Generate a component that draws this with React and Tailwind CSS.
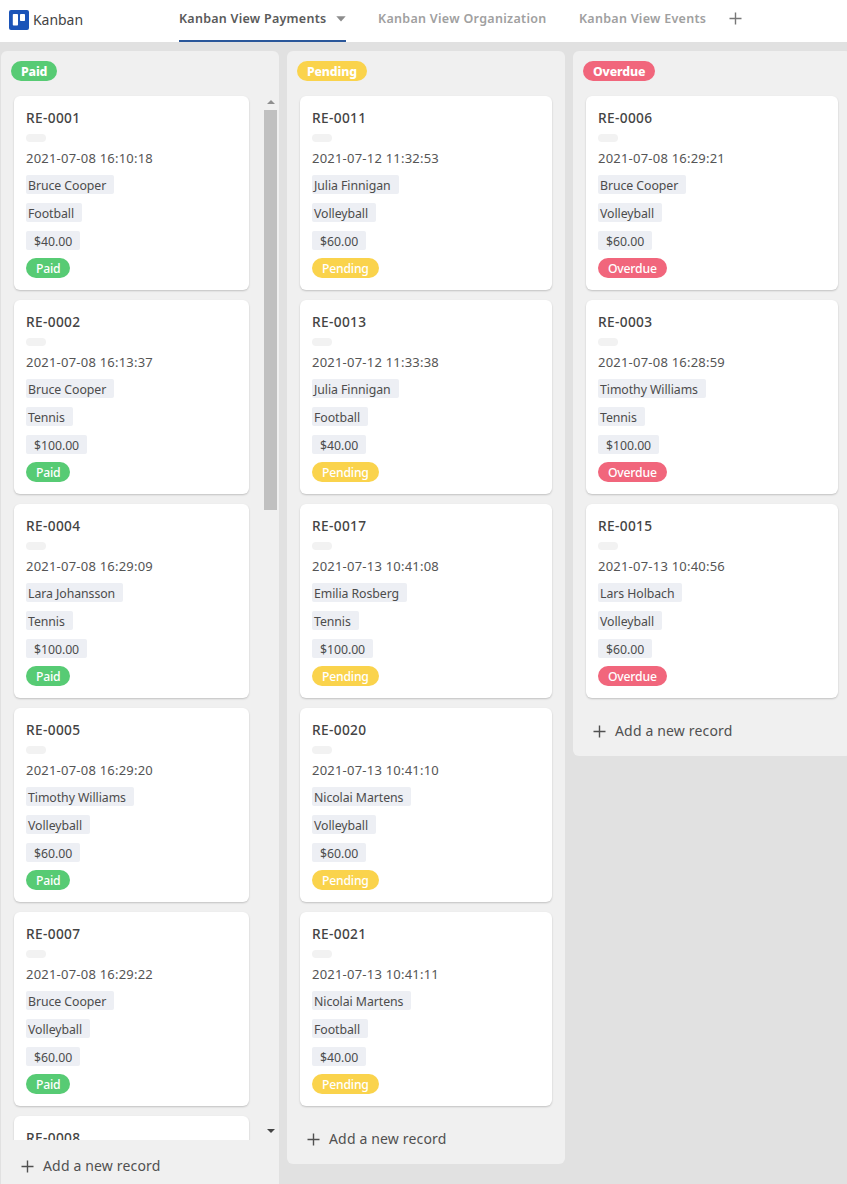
const STATUS = {
  Paid: "bg-[#57cb74]",
  Pending: "bg-[#fad34c]",
  Overdue: "bg-[#f1667c]",
};

const COLUMNS = [
  {
    status: "Paid",
    scroll: true,
    cards: [
      ["RE-0001", "2021-07-08 16:10:18", "Bruce Cooper", "Football", "$40.00"],
      ["RE-0002", "2021-07-08 16:13:37", "Bruce Cooper", "Tennis", "$100.00"],
      ["RE-0004", "2021-07-08 16:29:09", "Lara Johansson", "Tennis", "$100.00"],
      ["RE-0005", "2021-07-08 16:29:20", "Timothy Williams", "Volleyball", "$60.00"],
      ["RE-0007", "2021-07-08 16:29:22", "Bruce Cooper", "Volleyball", "$60.00"],
      ["RE-0008"],
    ],
  },
  {
    status: "Pending",
    cards: [
      ["RE-0011", "2021-07-12 11:32:53", "Julia Finnigan", "Volleyball", "$60.00"],
      ["RE-0013", "2021-07-12 11:33:38", "Julia Finnigan", "Football", "$40.00"],
      ["RE-0017", "2021-07-13 10:41:08", "Emilia Rosberg", "Tennis", "$100.00"],
      ["RE-0020", "2021-07-13 10:41:10", "Nicolai Martens", "Volleyball", "$60.00"],
      ["RE-0021", "2021-07-13 10:41:11", "Nicolai Martens", "Football", "$40.00"],
    ],
  },
  {
    status: "Overdue",
    cards: [
      ["RE-0006", "2021-07-08 16:29:21", "Bruce Cooper", "Volleyball", "$60.00"],
      ["RE-0003", "2021-07-08 16:28:59", "Timothy Williams", "Tennis", "$100.00"],
      ["RE-0015", "2021-07-13 10:40:56", "Lars Holbach", "Volleyball", "$60.00"],
    ],
  },
];

function Plus({ className }) {
  return (
    <svg viewBox="0 0 13 13" className={className} fill="none" stroke="currentColor" strokeWidth="1.4">
      <path d="M6.5 0.5V12.5M0.5 6.5H12.5" />
    </svg>
  );
}

function Header() {
  return (
    <header className="flex h-[42px] w-full shrink-0 bg-white">
      <div className="flex h-[39px] w-[179px] items-center gap-1 pl-[9px]">
        <svg viewBox="0 0 20 20" className="h-5 w-5">
          <rect width="20" height="20" rx="2" fill="#1b54b8" />
          <rect x="3.8" y="4" width="5.2" height="11.5" rx="0.8" fill="#fff" />
          <rect x="11" y="4" width="5" height="7" rx="0.8" fill="#fff" />
        </svg>
        <span className="text-[14px] leading-5 tracking-[-0.05px] text-[#444]">Kanban</span>
      </div>
      <nav className="flex text-[12.5px] font-semibold leading-5 whitespace-nowrap">
        <div className="flex h-[42px] w-[167px] justify-between border-b-2 border-[#2a579a] pt-[9px]">
          <span className="tracking-[0.26px] text-[#5a5a5a]">Kanban View Payments</span>
          <svg viewBox="0 0 10 6" className="mt-[7px] h-[6px] w-[10px]">
            <path d="M0.3 0.3H9.7L5 5.6Z" fill="#8c8c8c" />
          </svg>
        </div>
        <span className="ml-8 w-[169px] pt-[9px] tracking-[0.3px] text-[#a0a0a0]">Kanban View Organization</span>
        <span className="ml-8 w-[128px] pt-[9px] tracking-[0.28px] text-[#a0a0a0]">Kanban View Events</span>
        <Plus className="mt-[12px] ml-[22px] h-[13px] w-[13px] text-[#777]" />
      </nav>
    </header>
  );
}

function Tag({ children, money }) {
  return (
    <div
      className={
        "flex h-[19px] w-fit items-center rounded-[2px] bg-[#edeff4] pt-[2px] text-[12.3px] leading-[17px] text-[#4c4c4c] whitespace-nowrap tracking-[-0.06px] " +
        (money ? "px-2" : "pr-2 pl-[2px]")
      }
    >
      {children}
    </div>
  );
}

function Card({ data, status }) {
  const [id, date, person, sport, price] = data;
  return (
    <article className="h-[194px] shrink-0 rounded-md bg-white px-3 pt-3 shadow-[0_1px_2px_rgba(0,0,0,0.2)]">
      <div className="h-5 text-[13.7px] font-medium leading-5 tracking-[0.35px] text-[#444]">{id}</div>
      <div className="mt-[6px] h-2 w-5 rounded-full bg-[#f2f2f2]" />
      {date && (
        <>
          <div className="mt-[6px] h-5 text-[13px] leading-5 tracking-[0.22px] text-[#555]">{date}</div>
          <div className="mt-[7px] flex flex-col gap-[9px]">
            <Tag>{person}</Tag>
            <Tag>{sport}</Tag>
            <Tag money>{price}</Tag>
          </div>
          <div
            className={
              "mt-2 h-5 w-fit rounded-full px-[10px] text-[12.2px] font-medium leading-[21px] tracking-[-0.2px] text-white " +
              STATUS[status]
            }
          >
            {status}
          </div>
        </>
      )}
    </article>
  );
}

function AddRecord({ className }) {
  return (
    <div className={"flex h-5 shrink-0 items-center text-[#505050] " + className}>
      <Plus className="h-[13px] w-[13px]" />
      <span className="ml-[9px] text-[14px] leading-5 tracking-[0.16px]">Add a new record</span>
    </div>
  );
}

function Column({ status, cards, scroll }) {
  return (
    <section
      className={"flex w-[278px] shrink-0 flex-col rounded-md bg-[#f0f0f0] pt-[10px] " + (scroll ? "h-[1150px]" : "pb-[15px]")}
    >
      <div
        className={
          "ml-[10px] h-5 w-fit shrink-0 rounded-full px-[10px] text-[12.3px] font-extrabold leading-[21px] tracking-[-0.15px] text-white " +
          STATUS[status]
        }
      >
        {status}
      </div>
      <div className={"mt-[11px] flex pt-1 " + (scroll ? "h-[1048px] overflow-hidden" : "")}>
        <div className={"ml-[13px] flex flex-col gap-[10px] " + (scroll ? "w-[235px]" : "w-[252px]")}>
          {cards.map((c) => (
            <Card key={c[0]} data={c} status={status} />
          ))}
        </div>
        {scroll && (
          <div className="ml-[15px] flex h-[1044px] w-[13px] flex-col items-center">
            <svg viewBox="0 0 8 4" className="mt-[4px] h-1 w-2 shrink-0">
              <path d="M4 0L8 4H0Z" fill="#8f8f8f" />
            </svg>
            <div className="mt-[6px] h-[400px] w-[13px] bg-[#c0c0c0]" />
            <svg viewBox="0 0 8 4" className="mt-auto mb-[7px] h-1 w-2 shrink-0">
              <path d="M0 0H8L4 4Z" fill="#444" />
            </svg>
          </div>
        )}
      </div>
      <AddRecord className={scroll ? "mt-4 ml-5" : "mt-[23px] ml-5"} />
    </section>
  );
}

export default function App() {
  return (
    <div className="flex h-[1184px] w-[847px] flex-col overflow-hidden bg-[#e1e1e1] font-['Noto_Sans',sans-serif]">
      <Header />
      <main className="mt-[9px] ml-px flex items-start gap-2">
        {COLUMNS.map((c) => (
          <Column key={c.status} {...c} />
        ))}
      </main>
    </div>
  );
}
